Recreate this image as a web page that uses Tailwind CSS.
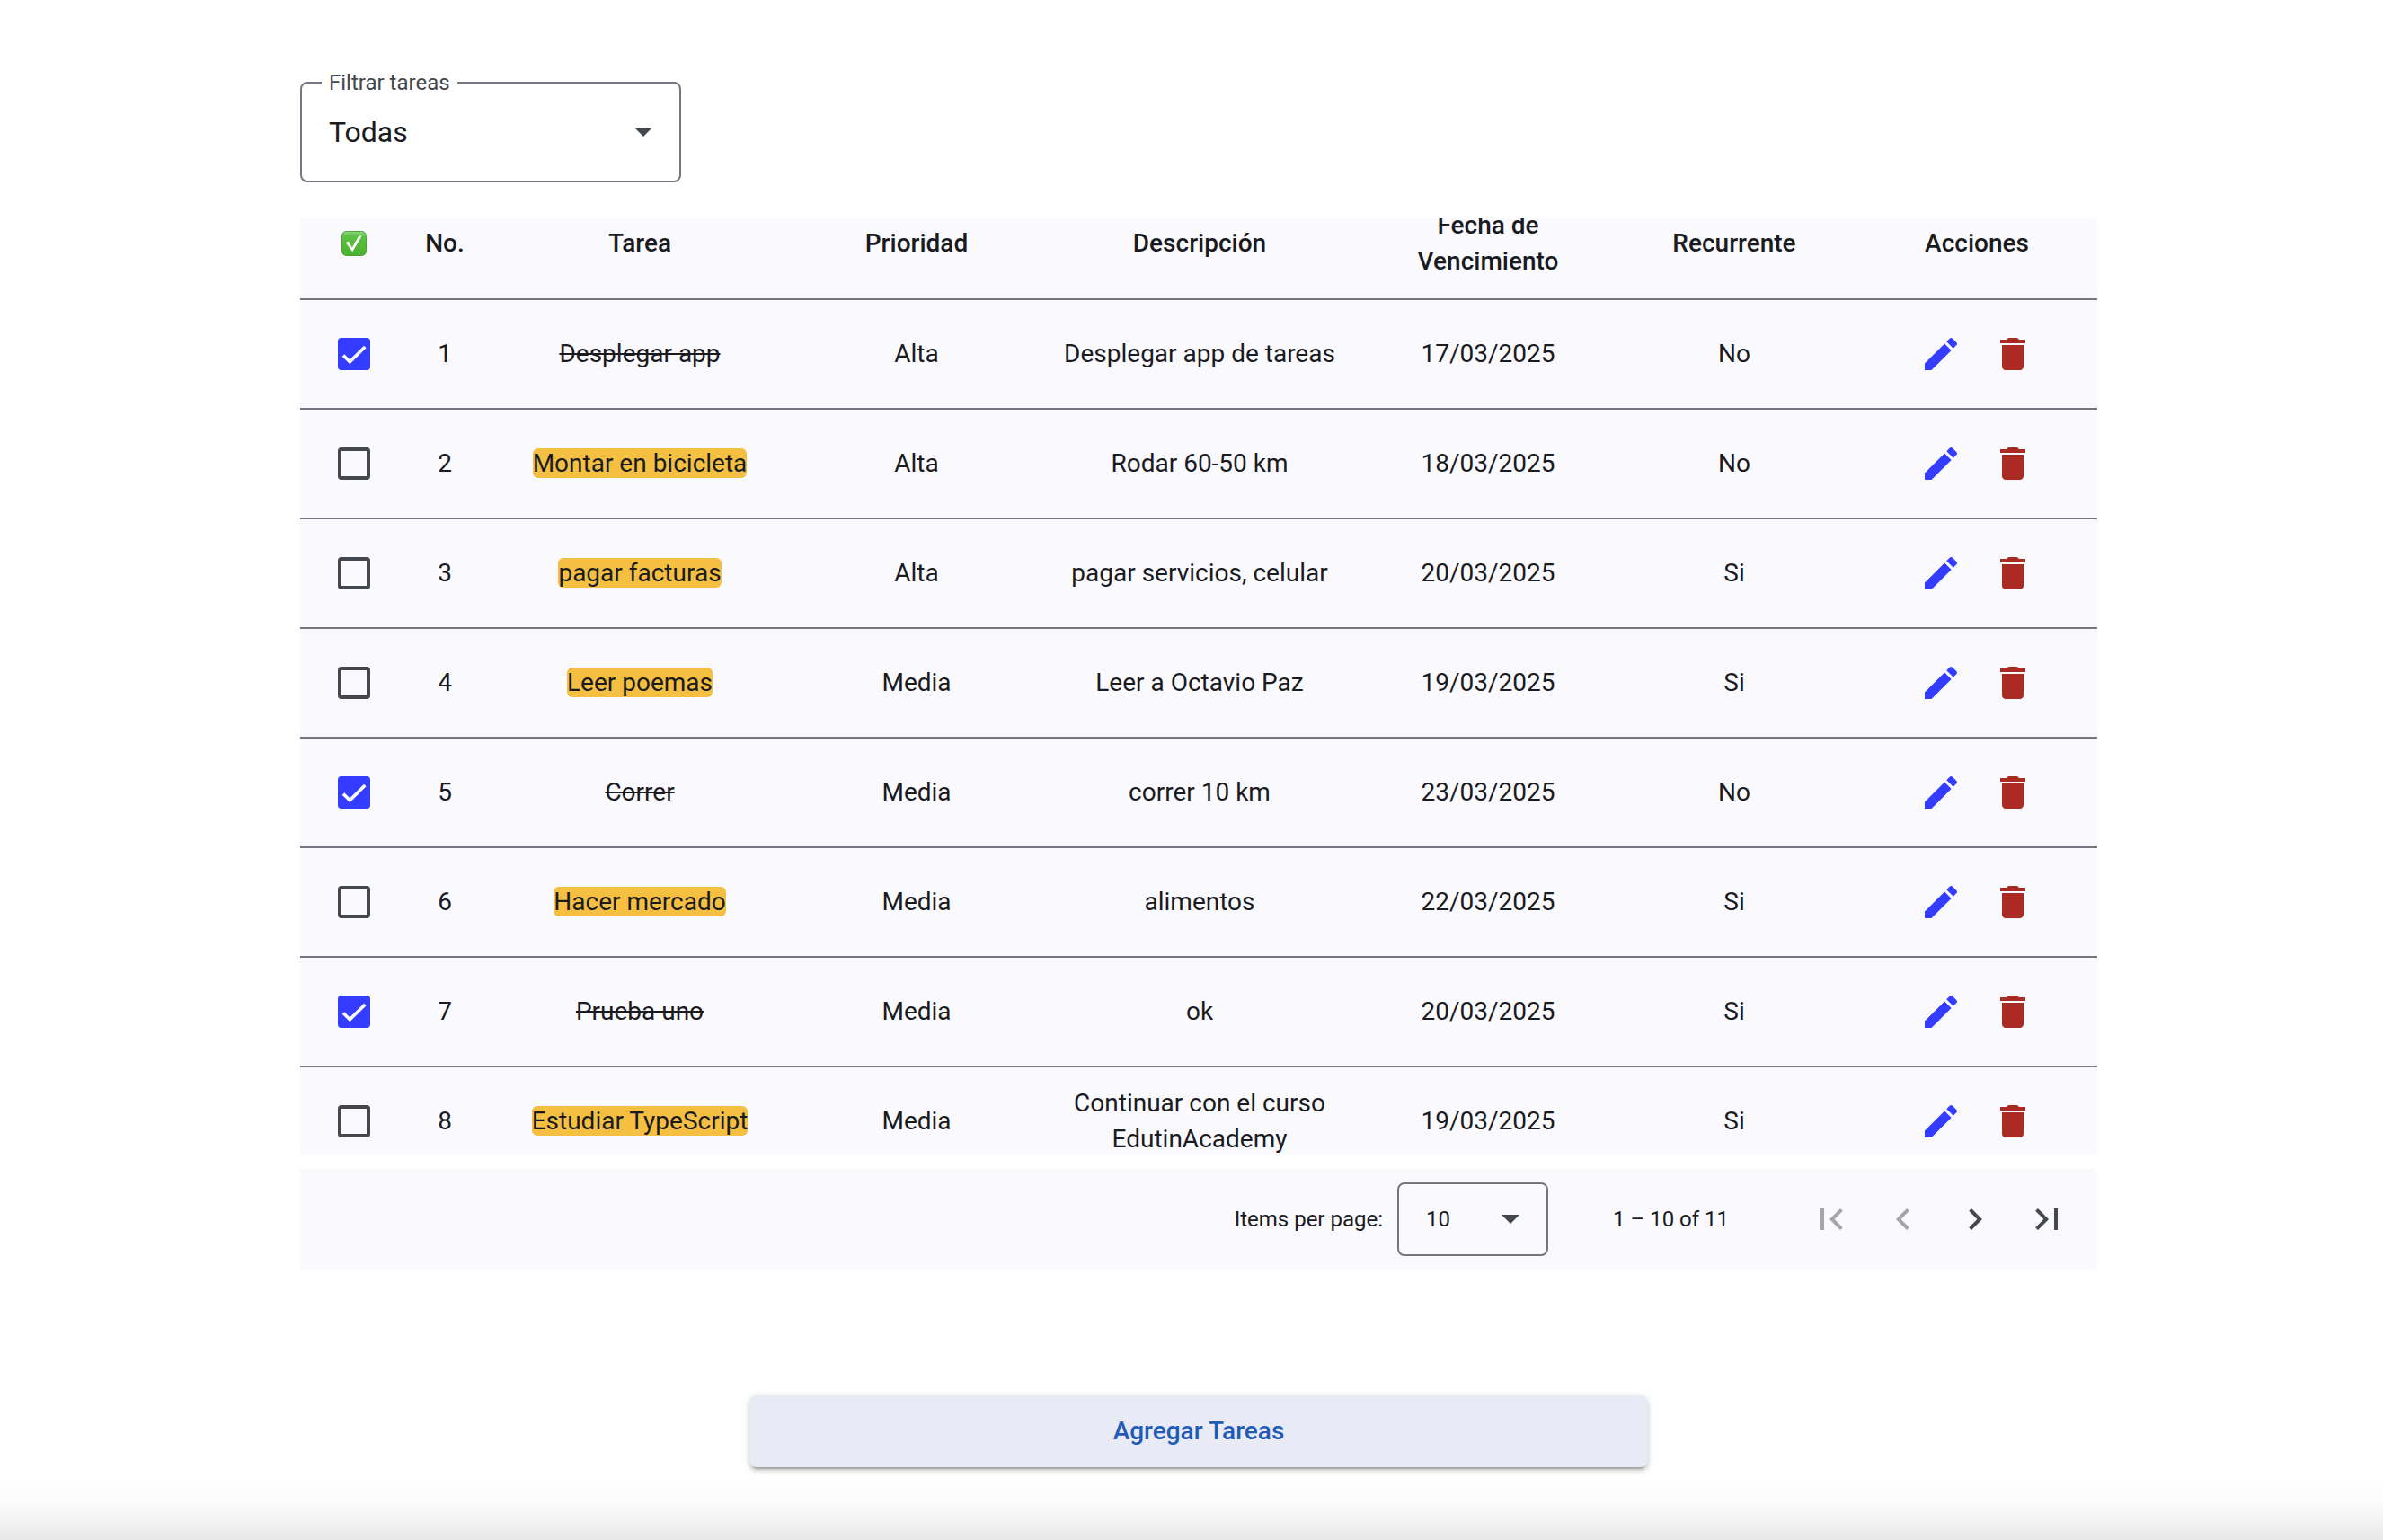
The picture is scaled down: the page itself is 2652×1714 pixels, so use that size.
<!DOCTYPE html>
<html lang="es">

    <head>
        <meta charset="UTF-8">
        <meta name="viewport" content="width=device-width, initial-scale=1.0">
        <title>Lista de Tareas</title>
        <script src="https://cdn.jsdelivr.net/npm/@tailwindcss/browser@4"></script>
    </head>

    <body class="bg-white min-h-screen flex flex-col pl-4 text-[#1a1b1f] font-[Roboto,sans-serif]">
        <main class="w-full max-w-[2000px] mx-auto pt-[91px]">
            <!-- Filter -->
            <div class="relative w-[424px] max-w-full">
                <label for="filter" class="absolute z-10 left-6 -top-[15px] px-2 bg-white text-[24px] leading-8 text-[#44474e]">Filtrar tareas</label>
                <select id="filter"
                    class="block appearance-none w-full h-28 px-[30px] rounded-lg border-2 border-[#74777f] bg-white text-[32px] leading-12">
                    <option>Todas</option>
                    <option>Completadas</option>
                    <option>Pendientes</option>
                </select>
                <svg class="absolute right-8 inset-y-0 my-auto w-5 h-[10px] fill-[#44474e] pointer-events-none" viewBox="0 0 10 5">
                    <path d="M0 0l5 5 5-5z" />
                </svg>
            </div>

            <!-- Tasks -->
            <div class="mt-10 max-h-[1042px] overflow-auto [scrollbar-width:none] bg-[#faf9fd]">
                <table class="-mt-[34px] w-full table-fixed border-collapse text-center text-[28px] leading-10">
                    <colgroup>
                        <col class="w-[120px]">
                        <col class="w-[82px]">
                        <col class="w-[352px]">
                        <col class="w-[264px]">
                        <col class="w-[366px]">
                        <col class="w-[276px]">
                        <col class="w-[272px]">
                        <col class="w-[268px]">
                    </colgroup>
                    <thead>
                        <tr class="h-[124px] border-b-2 border-[#74777f]">
                            <th>
                                <svg class="w-7 h-7 mx-auto" viewBox="0 0 28 28" role="img" aria-label="Completada">
                                    <defs>
                                        <linearGradient id="green" x1="0" y1="0" x2="0" y2="1">
                                            <stop offset="0" stop-color="#8fd880" />
                                            <stop offset="0.2" stop-color="#5cc043" />
                                            <stop offset="1" stop-color="#4bb02d" />
                                        </linearGradient>
                                    </defs>
                                    <rect x="0.5" y="0.5" width="27" height="27" rx="5" fill="url(#green)" stroke="#4ea339" />
                                    <path d="M4.8 13l3-1.2 4 6.6L19.4 5.6h3.3L12.2 23.2z" fill="#fff" />
                                </svg>
                            </th>
                            <th class="font-medium">No.</th>
                            <th class="font-medium">Tarea</th>
                            <th class="font-medium">Prioridad</th>
                            <th class="font-medium">Descripción</th>
                            <th class="font-medium px-8">Fecha de Vencimiento</th>
                            <th class="font-medium">Recurrente</th>
                            <th class="font-medium">Acciones</th>
                        </tr>
                    </thead>
                    <tbody id="taskList"></tbody>
                </table>
            </div>

            <!-- Paginator -->
            <div class="mt-4 h-28 pr-4 flex items-center justify-end bg-[#faf9fd] text-[24px] leading-8">
                <label for="pageSize" class="mr-4">Items per page:</label>
                <div class="relative w-[168px] mr-6">
                    <select id="pageSize"
                        class="block appearance-none w-full h-[82px] px-[30px] rounded-lg border-2 border-[#74777f] bg-transparent">
                        <option>10</option>
                        <option>25</option>
                        <option>50</option>
                    </select>
                    <svg class="absolute right-8 inset-y-0 my-auto w-5 h-[10px] fill-[#44474e] pointer-events-none" viewBox="0 0 10 5">
                        <path d="M0 0l5 5 5-5z" />
                    </svg>
                </div>
                <span class="ml-12 mr-16 min-w-[139px]">1 – 10 of 11</span>
                <div class="flex text-[#44474e]">
                    <button type="button" disabled aria-label="First page" class="size-20 grid place-items-center text-[#a5a5a7]">
                        <svg class="size-12 fill-current" viewBox="0 0 24 24">
                            <path d="M18.41 16.59L13.82 12l4.59-4.59L17 6l-6 6 6 6zM6 6h2v12H6z" />
                        </svg>
                    </button>
                    <button type="button" disabled aria-label="Previous page" class="size-20 grid place-items-center text-[#a5a5a7]">
                        <svg class="size-12 fill-current" viewBox="0 0 24 24">
                            <path d="M15.41 7.41L14 6l-6 6 6 6 1.41-1.41L10.83 12z" />
                        </svg>
                    </button>
                    <button type="button" aria-label="Next page" class="size-20 grid place-items-center">
                        <svg class="size-12 fill-current" viewBox="0 0 24 24">
                            <path d="M10 6L8.59 7.41 13.17 12l-4.58 4.59L10 18l6-6z" />
                        </svg>
                    </button>
                    <button type="button" aria-label="Last page" class="size-20 grid place-items-center">
                        <svg class="size-12 fill-current" viewBox="0 0 24 24">
                            <path d="M5.59 7.41L10.18 12l-4.59 4.59L7 18l6-6-6-6zM16 6h2v12h-2z" />
                        </svg>
                    </button>
                </div>
            </div>

            <button type="button"
                class="block w-1/2 h-20 mx-auto mt-[140px] rounded-lg bg-[#e8ebf6] text-[#225ab8] text-[28px] font-medium shadow-[0_6px_2px_-4px_rgba(0,0,0,0.2),0_4px_4px_0_rgba(0,0,0,0.14),0_2px_10px_0_rgba(0,0,0,0.12)]">
                Agregar Tareas
            </button>
        </main>

        <!-- Bottom fade -->
        <div class="-ml-4 mt-3 flex-1 min-h-16 bg-[linear-gradient(#fff,#fcfcfc_35%,#f3f3f3_70%,#e8e8e8)]"></div>

        <script>
            const tasks = [
                { name: 'Desplegar app', priority: 'Alta', description: 'Desplegar app de tareas', date: '17/03/2025', recurring: 'No', done: true },
                { name: 'Montar en bicicleta', priority: 'Alta', description: 'Rodar 60-50 km', date: '18/03/2025', recurring: 'No', done: false },
                { name: 'pagar facturas', priority: 'Alta', description: 'pagar servicios, celular', date: '20/03/2025', recurring: 'Si', done: false },
                { name: 'Leer poemas', priority: 'Media', description: 'Leer a Octavio Paz', date: '19/03/2025', recurring: 'Si', done: false },
                { name: 'Correr', priority: 'Media', description: 'correr 10 km', date: '23/03/2025', recurring: 'No', done: true },
                { name: 'Hacer mercado', priority: 'Media', description: 'alimentos', date: '22/03/2025', recurring: 'Si', done: false },
                { name: 'Prueba uno', priority: 'Media', description: 'ok', date: '20/03/2025', recurring: 'Si', done: true },
                { name: 'Estudiar TypeScript', priority: 'Media', description: 'Continuar con el curso EdutinAcademy', date: '19/03/2025', recurring: 'Si', done: false },
            ];

            function renderTasks() {
                const list = document.getElementById('taskList');
                list.innerHTML = '';
                tasks.forEach((task, index) => {
                    const tr = document.createElement('tr');
                    tr.className = 'h-[122px] border-b-2 border-[#74777f]';
                    tr.innerHTML = `
                    <td>
                        <div class="relative size-9 mx-auto">
                            <input type="checkbox" aria-label="${task.name}" ${task.done ? 'checked' : ''}
                                class="peer block appearance-none size-9 rounded-sm border-4 border-[#44474e] checked:border-[#343dff] checked:bg-[#343dff]">
                            <svg class="absolute inset-0 size-9 hidden peer-checked:block pointer-events-none" viewBox="0 0 36 36">
                                <path d="M6 19.5l7.3 7.2L30.3 10" fill="none" stroke="#fff" stroke-width="3.6" />
                            </svg>
                        </div>
                    </td>
                    <td>${index + 1}</td>
                    <td><span class="${task.done ? 'line-through' : 'rounded-md bg-[#f5bf42]'}">${task.name}</span></td>
                    <td>${task.priority}</td>
                    <td class="px-8">${task.description}</td>
                    <td>${task.date}</td>
                    <td>${task.recurring}</td>
                    <td>
                        <div class="flex justify-center">
                            <button type="button" aria-label="Editar" class="size-20 grid place-items-center text-[#343dff]">
                                <svg class="size-12 fill-current" viewBox="0 0 24 24">
                                    <path d="M3 17.25V21h3.75L17.81 9.94l-3.75-3.75L3 17.25zM20.71 7.04c.39-.39.39-1.02 0-1.41l-2.34-2.34c-.39-.39-1.02-.39-1.41 0l-1.83 1.83 3.75 3.75 1.83-1.83z" />
                                </svg>
                            </button>
                            <button type="button" aria-label="Eliminar" class="size-20 grid place-items-center text-[#a92b24]">
                                <svg class="size-12 fill-current" viewBox="0 0 24 24">
                                    <path d="M6 19c0 1.1.9 2 2 2h8c1.1 0 2-.9 2-2V7H6v12zM19 4h-3.5l-1-1h-5l-1 1H5v2h14V4z" />
                                </svg>
                            </button>
                        </div>
                    </td>
                `;
                    list.appendChild(tr);
                });
            }

            renderTasks();
        </script>
    </body>

</html>
